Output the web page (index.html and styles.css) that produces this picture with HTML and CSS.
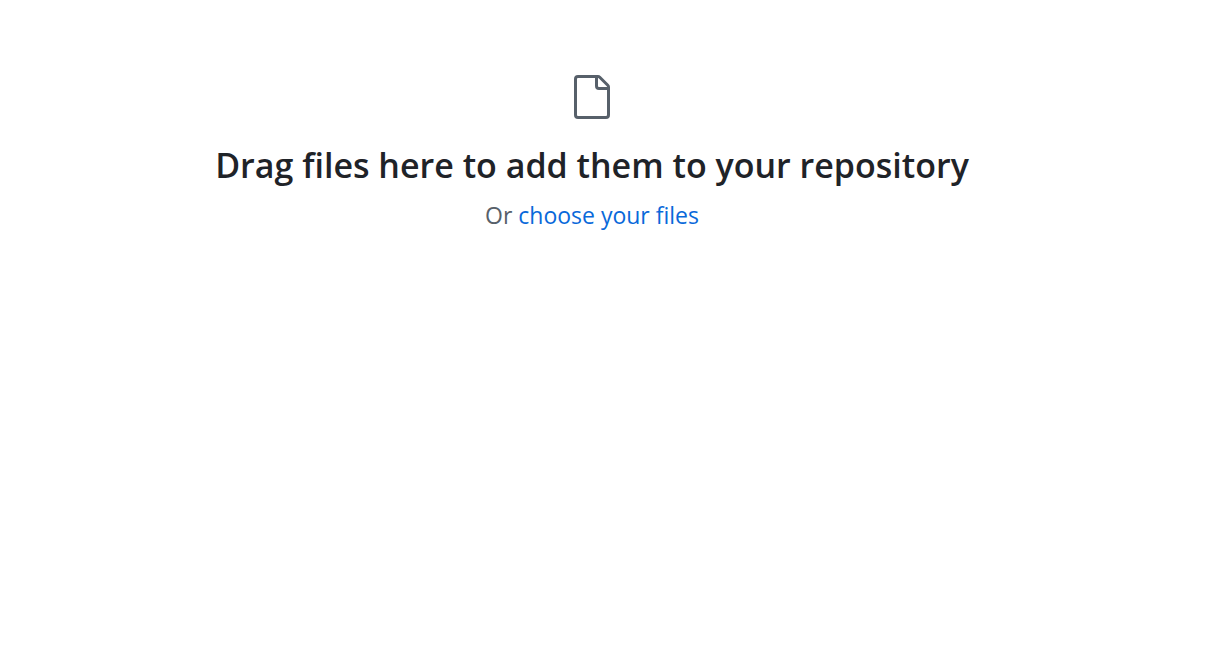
FILE: index.html
```html
<!DOCTYPE html>
<html lang="en">
<head>
<meta charset="utf-8">
<title>Upload files</title>
<link rel="stylesheet" href="styles.css">
</head>
<body>
<main class="dropzone">
  <svg class="file-icon" viewBox="0 0 24 24" aria-hidden="true"><path d="M3 3a2 2 0 0 1 2-2h9.982a2 2 0 0 1 1.414.586l4.018 4.018A2 2 0 0 1 21 7.018V21a2 2 0 0 1-2 2H5a2 2 0 0 1-2-2Zm2-.5a.5.5 0 0 0-.5.5v18a.5.5 0 0 0 .5.5h14a.5.5 0 0 0 .5-.5V8.5h-4a2 2 0 0 1-2-2v-4Zm10 0v4a.5.5 0 0 0 .5.5h4a.5.5 0 0 0-.146-.336l-4.018-4.018A.5.5 0 0 0 15 2.5Z"/></svg>
  <h1 class="title">Drag files here to add them to your repository</h1>
  <p class="hint">Or <a class="link" href="#">choose your files</a></p>
</main>
</body>
</html>
```
FILE: styles.css
```css
body {
  margin: 0;
  background: #ffffff;
  font-family: "Open Sans", "Noto Sans", sans-serif;
  font-variant-ligatures: none;
}

.dropzone {
  display: flex;
  flex-direction: column;
  align-items: center;
  padding: 73px 46px 0 0;
}

.file-icon {
  width: 48px;
  height: 48px;
  fill: #57606a;
}

.title {
  margin: 16px 0 0;
  color: #1f2328;
  font-size: 34px;
  font-weight: 600;
  line-height: 56px;
  text-align: center;
}

.hint {
  margin: 4px 0 0;
  color: #57606a;
  font-size: 23px;
  line-height: 36px;
}

.link {
  color: #0969da;
  text-decoration: none;
}
```
